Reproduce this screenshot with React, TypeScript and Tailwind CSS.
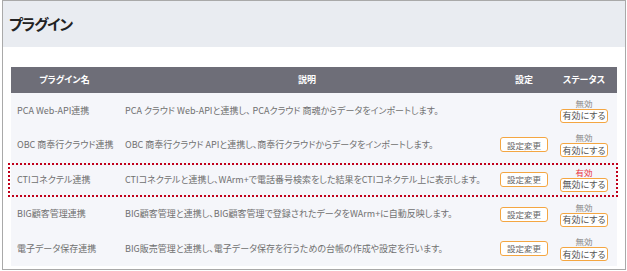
import React from "react";

type Plugin = {
  name: string;
  desc: string;
  settings: boolean;
  enabled: boolean;
};

const plugins: Plugin[] = [
  {
    name: "PCA Web-API連携",
    desc: "PCA クラウド Web-APIと連携し、 PCAクラウド 商魂からデータをインポートします。",
    settings: false,
    enabled: false,
  },
  {
    name: "OBC 商奉行クラウド連携",
    desc: "OBC 商奉行クラウド APIと連携し、商奉行クラウドからデータをインポートします。",
    settings: true,
    enabled: false,
  },
  {
    name: "CTIコネクテル連携",
    desc: "CTIコネクテルと連携し、WArm+で電話番号検索をした結果をCTIコネクテル上に表示します。",
    settings: true,
    enabled: true,
  },
  {
    name: "BIG顧客管理連携",
    desc: "BIG顧客管理と連携し、BIG顧客管理で登録されたデータをWArm+に自動反映します。",
    settings: true,
    enabled: false,
  },
  {
    name: "電子データ保存連携",
    desc: "BIG販売管理と連携し、電子データ保存を行うための台帳の作成や設定を行います。",
    settings: true,
    enabled: false,
  },
];

const font = "font-['Noto_Sans_CJK_JP','Noto_Sans',sans-serif] [font-feature-settings:'palt']";

export default function App() {
  return (
    <div className={`w-[627px] h-[271px] bg-white ${font}`}>
      <div className="relative ml-[2px] w-[624px] h-[270px] border border-[#a9a9a9] flex flex-col">
        <div className="h-[46px] bg-[#e9ecf1] flex items-center pl-[6px]">
          <h1 className="text-[15px] font-bold text-[#222] tracking-[-1.2px]">
            プラグイン
          </h1>
        </div>
        <div className="px-[8px] pt-[20px]">
          <div className="grid grid-cols-[107px_378px_56px_64px] h-[26px] bg-[#6e6e78] items-center text-white text-[9px] font-bold">
            <div className="text-center">プラグイン名</div>
            <div className="text-center">説明</div>
            <div className="text-center">設定</div>
            <div className="text-center">ステータス</div>
          </div>
          {plugins.map((p) => (
            <div
              key={p.name}
              className="grid grid-cols-[107px_378px_56px_64px] h-[34.6px] bg-[#f5f6fa] items-center text-[9px] text-[#707070]"
            >
              <div className="pl-[6px] whitespace-nowrap">{p.name}</div>
              <div className="pl-[7px] whitespace-nowrap">{p.desc}</div>
              <div className="flex justify-center">
                {p.settings && (
                  <button className="w-[48px] h-[15px] bg-white border-[1.5px] border-[#f4a642] rounded-[3px] text-[8.5px] leading-none text-[#666]">
                    設定変更
                  </button>
                )}
              </div>
              <div className="flex flex-col items-center gap-[1px]">
                <span
                  className={`text-[8.5px] leading-[10px] ${
                    p.enabled ? "text-[#e8323c]" : "text-[#888]"
                  }`}
                >
                  {p.enabled ? "有効" : "無効"}
                </span>
                <button className="w-[48px] h-[14px] bg-white border-[1.5px] border-[#f4a642] rounded-[3px] text-[9px] leading-none text-[#555]">
                  {p.enabled ? "無効にする" : "有効にする"}
                </button>
              </div>
            </div>
          ))}
        </div>
        <div className="absolute left-[5px] top-[162px] w-[610px] h-[34px] border-2 border-dotted border-[#c0001a]" />
      </div>
    </div>
  );
}
